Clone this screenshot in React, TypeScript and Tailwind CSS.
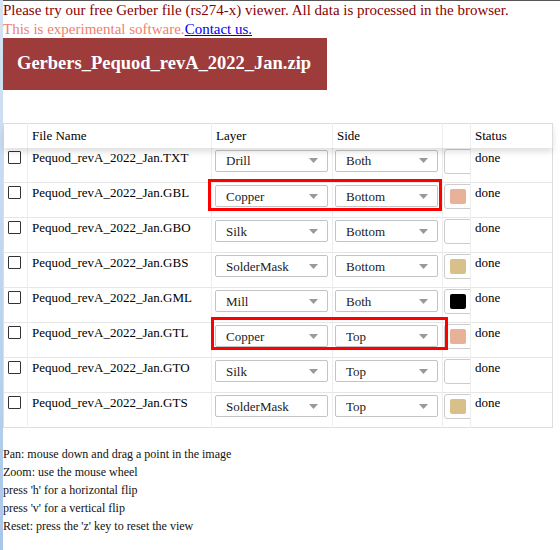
import React from 'react';

const rows = [
  { file: 'Pequod_revA_2022_Jan.TXT', layer: 'Drill', side: 'Both', color: '' },
  { file: 'Pequod_revA_2022_Jan.GBL', layer: 'Copper', side: 'Bottom', color: 'bg-[#e8b298]' },
  { file: 'Pequod_revA_2022_Jan.GBO', layer: 'Silk', side: 'Bottom', color: '' },
  { file: 'Pequod_revA_2022_Jan.GBS', layer: 'SolderMask', side: 'Bottom', color: 'bg-[#d8c08a]' },
  { file: 'Pequod_revA_2022_Jan.GML', layer: 'Mill', side: 'Both', color: 'bg-black' },
  { file: 'Pequod_revA_2022_Jan.GTL', layer: 'Copper', side: 'Top', color: 'bg-[#e8b298]' },
  { file: 'Pequod_revA_2022_Jan.GTO', layer: 'Silk', side: 'Top', color: '' },
  { file: 'Pequod_revA_2022_Jan.GTS', layer: 'SolderMask', side: 'Top', color: 'bg-[#d8c08a]' },
];

function Select({ value, width }: { value: string; width: string }) {
  return (
    <div className={`${width} h-[22px] flex items-center justify-between border border-[#c4c4c4] rounded-[2px] bg-white pl-[10px] pr-[9px]`}>
      <span className="text-[13px] text-[#222] leading-none">{value}</span>
      <svg width="9" height="5" viewBox="0 0 9 5">
        <path d="M0 0 L9 0 L4.5 5 Z" fill="#999" />
      </svg>
    </div>
  );
}

export default function App() {
  return (
    <div className="min-h-[550px] flex bg-white font-['Liberation_Serif',serif]">
      <div className="w-[3px] bg-gradient-to-b from-[#d6e4f4] to-[#a9c7e8]" />
      <div className="flex-1 border-t border-[#555]">
        <div className="text-[15px] leading-[18.5px]">
          <div className="text-[#8b0000]">
            Please try our free Gerber file (rs274-x) viewer. All data is processed in the browser.
          </div>
          <div className="text-[#f08070]">
            This is experimental software.<a className="text-[#0000ee] underline" href="#">Contact us.</a>
          </div>
        </div>

        <div className="w-[324px] h-[52px] bg-[#9e3b3b] flex items-center pl-[14px]">
          <span className="text-white font-bold text-[18.5px]">Gerbers_Pequod_revA_2022_Jan.zip</span>
        </div>

        <div className="relative mt-[33px] w-[549px]">
          <table className="w-[549px] border-collapse border border-[#ddd] text-[13px] text-black table-fixed">
            <colgroup>
              <col className="w-[24px]" />
              <col className="w-[184px]" />
              <col className="w-[121px]" />
              <col className="w-[110px]" />
              <col className="w-[28px]" />
              <col className="w-[82px]" />
            </colgroup>
            <thead>
              <tr className="h-[24px] shadow-[0_4px_6px_rgba(0,0,0,0.12)] relative">
                <th className="border-r border-[#eee]" />
                <th className="text-left font-normal pl-[4px] border-r border-[#eee]">File Name</th>
                <th className="text-left font-normal pl-[4px] border-r border-[#eee]">Layer</th>
                <th className="text-left font-normal pl-[4px] border-r border-[#eee]">Side</th>
                <th className="border-r border-[#eee]" />
                <th className="text-left font-normal pl-[4px]">Status</th>
              </tr>
            </thead>
            <tbody>
              {rows.map((r, i) => (
                <tr key={i} className={`h-[35px] ${i > 0 ? 'border-t border-[#e6e6e6]' : ''}`}>
                  <td className="align-top border-r border-[#eee] pt-[3px] pl-[4px]">
                    <div className="w-[13px] h-[13px] border border-[#333] rounded-[1px] bg-white" />
                  </td>
                  <td className="align-top border-r border-[#eee] pl-[4px] pt-[1px] leading-[17px]">{r.file}</td>
                  <td className="align-top border-r border-[#eee] pl-[3px] pt-[2px]">
                    <Select value={r.layer} width="w-[113px]" />
                  </td>
                  <td className="align-top border-r border-[#eee] pl-[2px] pt-[2px]">
                    <Select value={r.side} width="w-[103px]" />
                  </td>
                  <td className="align-top border-r border-[#eee] pl-[1px] pt-[1px] overflow-hidden">
                    <div className="w-[30px] h-[25px] border border-[#ccc] rounded-[3px] bg-white flex items-center pl-[5px]">
                      {r.color && <div className={`w-[16px] h-[15px] rounded-[2px] ${r.color}`} />}
                    </div>
                  </td>
                  <td className="align-top pl-[4px] pt-[1px] leading-[17px]">done</td>
                </tr>
              ))}
            </tbody>
          </table>
          <div className="absolute left-[205px] top-[56px] w-[234px] h-[32px] border-[3px] border-[#f00]" />
          <div className="absolute left-[208px] top-[194px] w-[237px] h-[33px] border-[3px] border-[#f00]" />
        </div>

        <div className="mt-[17px] text-[12px] leading-[18px] text-[#111]">
          <div>Pan: mouse down and drag a point in the image</div>
          <div>Zoom: use the mouse wheel</div>
          <div>press 'h' for a horizontal flip</div>
          <div>press 'v' for a vertical flip</div>
          <div>Reset: press the 'z' key to reset the view</div>
        </div>
      </div>
    </div>
  );
}
